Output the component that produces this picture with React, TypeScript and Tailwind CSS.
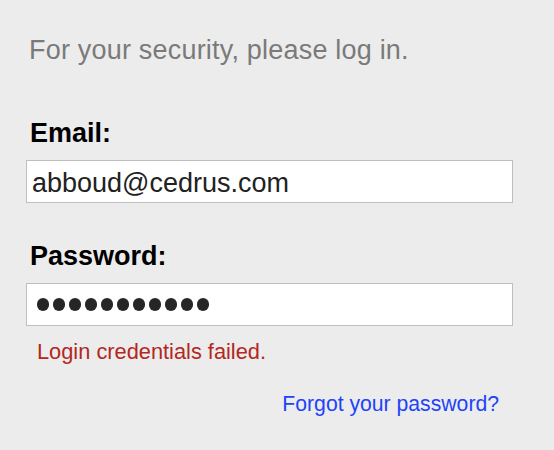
import React from "react";

export default function App() {
  const dots = Array.from({ length: 11 });
  return (
    <div className="w-[554px] h-[450px] bg-[#ececec] overflow-hidden font-['Liberation_Sans',Arial,sans-serif]">
      <div className="pl-[26px] pt-[35px] w-[513px]">
        <p className="text-[27px] leading-[31px] text-[#7a7a7a] pl-[3px] tracking-[0.2px]">
          For your security, please log in.
        </p>
        <label className="block mt-[52px] text-[27px] leading-[31px] font-bold text-black pl-[4px]">
          Email:
        </label>
        <div className="mt-[11px] h-[43px] border border-[#bfbfbf] bg-white pl-[5px] pt-[3px] text-[27px] leading-[38px] text-[#222]">
          abboud@cedrus.com
        </div>
        <label className="block mt-[38px] text-[27px] leading-[31px] font-bold text-black pl-[4px]">
          Password:
        </label>
        <div className="mt-[11px] h-[43px] border border-[#bfbfbf] bg-white pl-[10px] flex items-center gap-[3.6px]">
          {dots.map((_, i) => (
            <span key={i} className="block w-[12.4px] h-[12.4px] rounded-full bg-[#262626]" />
          ))}
        </div>
        <p className="mt-[13px] pl-[11px] text-[21.8px] leading-[25px] text-[#b3271f]">
          Login credentials failed.
        </p>
        <div className="mt-[27px] flex justify-end pr-[14px]">
          <a className="text-[21.2px] leading-[25px] text-[#1f43f8] cursor-pointer">
            Forgot your password?
          </a>
        </div>
      </div>
    </div>
  );
}
